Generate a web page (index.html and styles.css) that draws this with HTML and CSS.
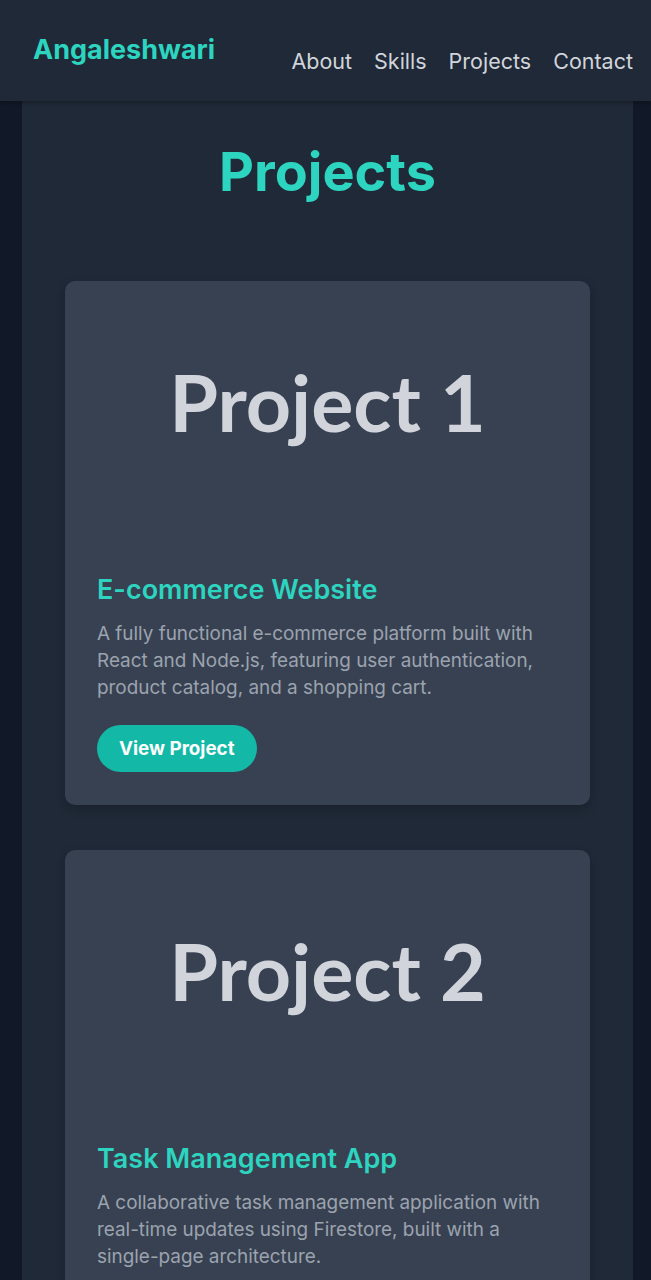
FILE: index.html
```html
<!DOCTYPE html>
<html lang="en">
<head>
<meta charset="utf-8">
<title>Angaleshwari - Projects</title>
<link rel="stylesheet" href="styles.css">
</head>
<body>
<header class="site-header">
  <a class="logo" href="#">Angaleshwari</a>
  <nav class="nav">
    <a href="#">About</a>
    <a href="#">Skills</a>
    <a href="#">Projects</a>
    <a href="#">Contact</a>
  </nav>
</header>
<main class="page">
  <section class="projects">
    <h2 class="section-title">Projects</h2>
    <div class="card-list">
      <article class="card">
        <div class="card-image">Project 1</div>
        <div class="card-body">
          <h3 class="card-title">E-commerce Website</h3>
          <p class="card-text">A fully functional e-commerce platform built with React and Node.js, featuring user authentication, product catalog, and a shopping cart.</p>
          <a class="btn" href="#">View Project</a>
        </div>
      </article>
      <article class="card">
        <div class="card-image">Project 2</div>
        <div class="card-body">
          <h3 class="card-title">Task Management App</h3>
          <p class="card-text">A collaborative task management application with real-time updates using Firestore, built with a single-page architecture.</p>
          <a class="btn" href="#">View Project</a>
        </div>
      </article>
    </div>
  </section>
</main>
</body>
</html>
```
FILE: styles.css
```css
* { box-sizing: border-box; }
html, body { margin: 0; padding: 0; }
body {
  background: #111827;
  font-family: Inter, "Noto Sans", sans-serif;
  color: #d1d5db;
}
a { text-decoration: none; }
.site-header {
  height: 101px;
  background: #1f2937;
  display: flex;
  align-items: center;
  justify-content: space-between;
  padding: 0 18px 0 33px;
  box-shadow: 0 2px 4px rgba(0,0,0,0.25);
  position: relative;
  z-index: 1;
}
.logo {
  color: #2dd4bf;
  font-weight: 700;
  font-size: 27px;
  margin-top: -3px;
}
.nav {
  display: flex;
  gap: 22px;
  margin-top: 21px;
}
.nav a {
  color: #d1d5db;
  font-size: 21.5px;
}
.page {
  margin: 0 18px 0 22px;
  background: #1f2937;
  min-height: 1179px;
}
.projects {
  padding: 40px 43px 40px 43px;
}
.section-title {
  margin: 0 0 78px;
  text-align: center;
  color: #2dd4bf;
  font-size: 54px;
  line-height: 62px;
  font-weight: 700;
}
.card-list {
  display: flex;
  flex-direction: column;
  gap: 45px;
}
.card {
  background: #374151;
  border-radius: 10px;
  overflow: hidden;
  box-shadow: 0 4px 10px rgba(0,0,0,0.2);
}
.card-image {
  height: 260px;
  padding-bottom: 20px;
  display: flex;
  align-items: center;
  justify-content: center;
  font-family: Lato, sans-serif;
  font-weight: 700;
  font-size: 79px;
  color: #d1d5db;
}
.card-body {
  padding: 32px 32px 33px;
}
.card-title {
  margin: 0 0 13px;
  color: #2dd4bf;
  font-size: 27px;
  line-height: 34px;
  font-weight: 600;
}
.card-text {
  margin: 0 0 24px;
  color: #9ca3af;
  font-size: 18.9px;
  line-height: 27px;
}
.btn {
  display: inline-block;
  background: #14b8a6;
  color: #ffffff;
  font-weight: 700;
  font-size: 18.8px;
  line-height: 23px;
  padding: 12px 22px;
  border-radius: 999px;
}
```
